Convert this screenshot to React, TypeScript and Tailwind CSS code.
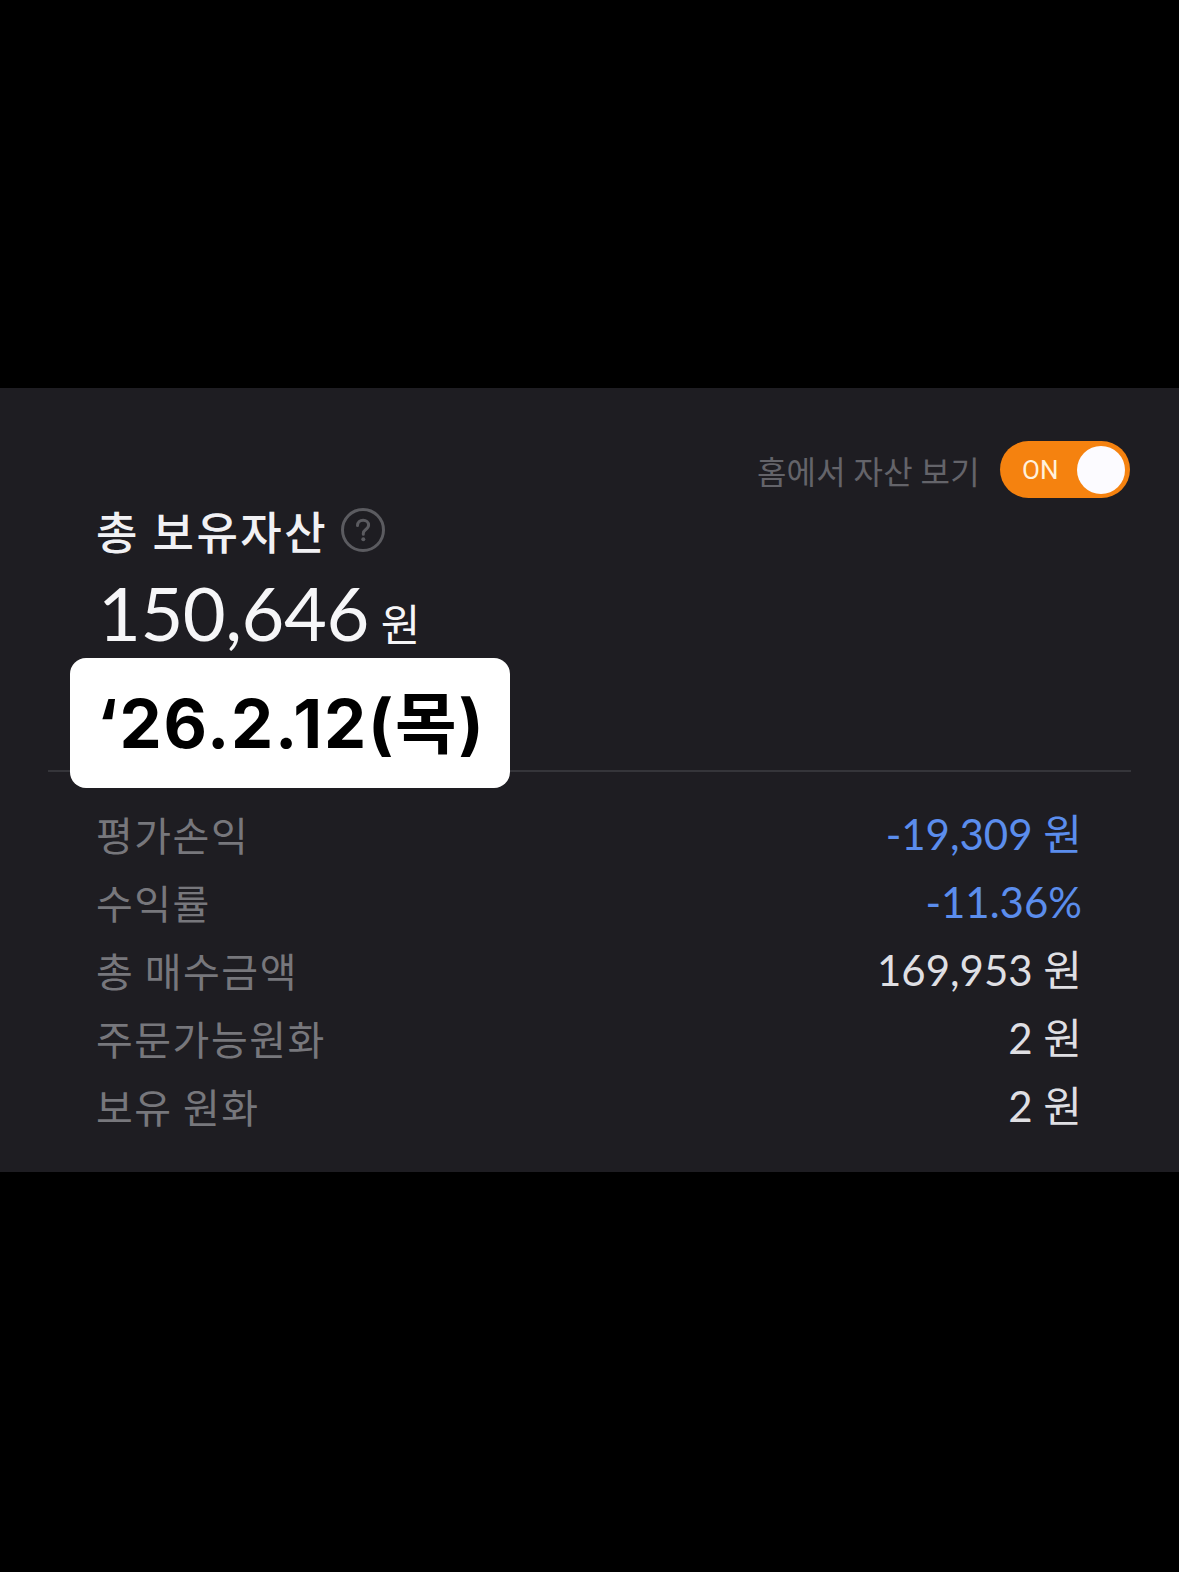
const kr = "font-['Noto_Sans_CJK_KR',sans-serif]";
const num = "font-['Lato','Noto_Sans_CJK_KR',sans-serif]";

type Row = { label: string; value: string; tone?: "blue" };

const rows: Row[] = [
  { label: "평가손익", value: "-19,309 원", tone: "blue" },
  { label: "수익률", value: "-11.36%", tone: "blue" },
  { label: "총 매수금액", value: "169,953 원" },
  { label: "주문가능원화", value: "2 원" },
  { label: "보유 원화", value: "2 원" },
];

function HelpIcon() {
  return (
    <svg width="46" height="46" viewBox="0 0 46 46" fill="none">
      <circle cx="23" cy="23" r="20.5" stroke="#5b5b60" strokeWidth="3" />
      <path
        d="M17.5 18.5c0-3.2 2.5-5.3 5.6-5.3 3.1 0 5.5 2 5.5 4.9 0 2.4-1.5 3.5-3.1 4.6-1.5 1-2.2 1.8-2.2 3.8v0.8"
        stroke="#5b5b60"
        strokeWidth="3"
        strokeLinecap="round"
      />
      <circle cx="23.3" cy="32.3" r="2" fill="#5b5b60" />
    </svg>
  );
}

export default function App() {
  return (
    <div className="flex h-[1572px] w-[1179px] flex-col bg-black">
      <div className="h-[388px]" />
      <section className="relative flex h-[784px] flex-col bg-[#1e1d22]">
        <div className="mt-[53px] flex items-center justify-end gap-5 pr-[49px]">
          <span className={`${kr} text-[32px] leading-none tracking-[0.3px] text-[#64646a]`}>
            홈에서 자산 보기
          </span>
          <div className="flex h-[57px] w-[130px] items-center justify-between rounded-full bg-[#f5820f] pl-[22px] pr-[5px]">
            <span className="font-['Roboto',sans-serif] text-[26px] leading-none text-[#fff1dc]">
              ON
            </span>
            <span className="h-[48px] w-[48px] rounded-full bg-[#fcfbff]" />
          </div>
        </div>

        <div className="mt-[4px] flex h-[56px] items-center gap-[12px] pl-[96px]">
          <h2 className={`${kr} text-[45px] font-medium leading-none tracking-[2.5px] text-[#f1f1f4]`}>
            총 보유자산
          </h2>
          <HelpIcon />
        </div>

        <div className="mt-[18px] flex items-baseline gap-3 pl-[98px]">
          <span className={`${num} text-[74px] leading-none tracking-[-0.5px] text-[#f6f6f8]`}>
            150,646
          </span>
          <span className={`${kr} text-[43px] leading-none text-[#f6f6f8]`}>원</span>
        </div>

        <div className="mx-[48px] mt-[120px] h-[2px] bg-[#35353a]" />

        <div className="mt-[28px] flex flex-col pl-[96px] pr-[97px]">
          {rows.map((row) => (
            <div key={row.label} className="flex h-[68px] items-center justify-between">
              <span className={`${kr} text-[40px] leading-none tracking-[1.5px] text-[#77777c]`}>
                {row.label}
              </span>
              <span
                className={`${num} text-[42px] leading-none ${
                  row.tone === "blue" ? "text-[#5b8ded]" : "text-[#dfdfe3]"
                }`}
              >
                {row.value}
              </span>
            </div>
          ))}
        </div>

        {/* date sticker laid over the card */}
        <div className="absolute left-[70px] top-[270px] flex h-[130px] w-[440px] items-center rounded-[16px] bg-white pl-[27px]">
          <span className="font-['Inter','Noto_Sans_CJK_KR',sans-serif] text-[67px] font-bold leading-none tracking-[1.8px] text-black">
            ‘26.2.12(목)
          </span>
        </div>
      </section>
      <div className="flex-1" />
    </div>
  );
}
